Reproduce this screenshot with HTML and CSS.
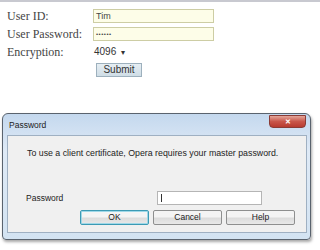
FILE: index.html
```html
<!DOCTYPE html>
<html>
<head>
<meta charset="utf-8">
<link rel="stylesheet" href="styles.css">
</head>
<body>
<div class="topline"></div>
<div class="form">
  <div class="label">User ID:</div>
  <div class="field"><div class="input">Tim</div></div>
  <div class="label">User Password:</div>
  <div class="field"><div class="input dots">••••••</div></div>
  <div class="label">Encryption:</div>
  <div class="field"><div class="select">4096 <span class="caret">▾</span></div></div>
  <div class="label"></div>
  <div class="field"><div class="submit">Submit</div></div>
</div>
<div class="dialog">
  <div class="titlebar">
    <span class="title">Password</span>
    <span class="close">✕</span>
  </div>
  <div class="panel">
    <div class="msg">To use a client certificate, Opera requires your master password.</div>
    <div class="pwrow">
      <span class="pwlabel">Password</span>
      <div class="pwinput"><span class="cursor"></span></div>
    </div>
    <div class="buttons">
      <div class="btn default">OK</div>
      <div class="btn">Cancel</div>
      <div class="btn">Help</div>
    </div>
  </div>
</div>
</body>
</html>
```
FILE: styles.css
```css
html, body { margin: 0; padding: 0; background: #ffffff; }
body { width: 320px; height: 250px; overflow: hidden; }
.topline { height: 2px; background: #c8c9d0; }
.form {
  display: grid;
  grid-template-columns: 86px 121px;
  grid-auto-rows: 14px;
  row-gap: 4px;
  padding: 7px 0 0 7px;
  font-family: "Liberation Serif", serif;
  font-size: 12px;
  color: #444;
}
.label { line-height: 14px; white-space: nowrap; }
.field { display: flex; align-items: stretch; }
.input {
  flex: 1;
  box-sizing: border-box;
  border: 1px solid #cdcda4;
  background: #fdfde8;
  font-family: "Liberation Sans", sans-serif;
  font-size: 9px;
  line-height: 12px;
  padding-left: 2px;
  color: #444;
}
.input.dots { font-size: 6px; letter-spacing: 0.5px; }
.select {
  font-family: "Liberation Sans", sans-serif;
  font-size: 10px;
  line-height: 14px;
  padding-left: 1px;
  color: #333;
}
.caret { font-size: 8px; margin-left: 2px; }
.submit {
  box-sizing: border-box;
  margin-left: 3px;
  width: 46px;
  border: 1px solid #9db0bd;
  background: linear-gradient(#e6eef3, #cfdde6);
  font-family: "Liberation Sans", sans-serif;
  font-size: 10px;
  line-height: 12px;
  text-align: center;
  color: #333;
}
.dialog {
  box-sizing: border-box;
  margin: 36px 0 0 2px;
  width: 309px;
  height: 127px;
  border: 1px solid #5a636e;
  border-radius: 6px 6px 4px 4px;
  background: linear-gradient(#c4d8ee, #dfeaf6 30%, #d3e3f2);
  padding: 0 3px 6px 4px;
  display: flex;
  flex-direction: column;
  box-shadow: 1px 2px 3px rgba(0,0,0,0.35);
  font-family: "Liberation Sans", sans-serif;
}
.titlebar {
  height: 21px;
  display: flex;
  justify-content: space-between;
  align-items: flex-start;
}
.title {
  font-size: 8.5px;
  line-height: 22px;
  margin-left: 2px;
  color: #222;
}
.close {
  box-sizing: border-box;
  width: 37px;
  height: 13px;
  margin-top: 1px;
  margin-right: 1px;
  border: 1px solid #8a3b35;
  border-radius: 0 0 4px 4px;
  background: linear-gradient(#e4a79b, #c9564a 50%, #b83b30);
  color: #fff;
  font-size: 7px;
  line-height: 11px;
  text-align: center;
  font-weight: bold;
}
.panel {
  flex: 1;
  box-sizing: border-box;
  border: 1px solid #9fb0c2;
  background: #f0f0f0;
  padding: 11px 11px 0 18px;
  display: flex;
  flex-direction: column;
  color: #222;
}
.msg {
  font-size: 8.8px;
  line-height: 12px;
  padding-left: 1px;
  white-space: nowrap;
}
.pwrow {
  margin-top: 32px;
  height: 14px;
  display: flex;
  align-items: center;
}
.pwlabel {
  width: 131px;
  font-size: 8.5px;
}
.pwinput {
  box-sizing: border-box;
  width: 105px;
  height: 14px;
  border: 1px solid #b5b5b5;
  background: #fff;
  padding: 2px 0 0 3px;
}
.cursor {
  display: block;
  width: 1px;
  height: 8px;
  background: #333;
}
.buttons {
  margin-top: 5px;
  display: flex;
  justify-content: flex-end;
  gap: 4px;
}
.btn {
  box-sizing: border-box;
  width: 69px;
  height: 15px;
  border: 1px solid #8e8f8f;
  border-radius: 2px;
  background: linear-gradient(#f4f4f4 45%, #dcdcdc 55%, #e8e8e8);
  font-size: 8.5px;
  line-height: 13px;
  text-align: center;
  color: #222;
}
.btn.default {
  border-color: #3c9ab4;
  box-shadow: inset 0 0 0 1px #9fd8e8;
}
```
